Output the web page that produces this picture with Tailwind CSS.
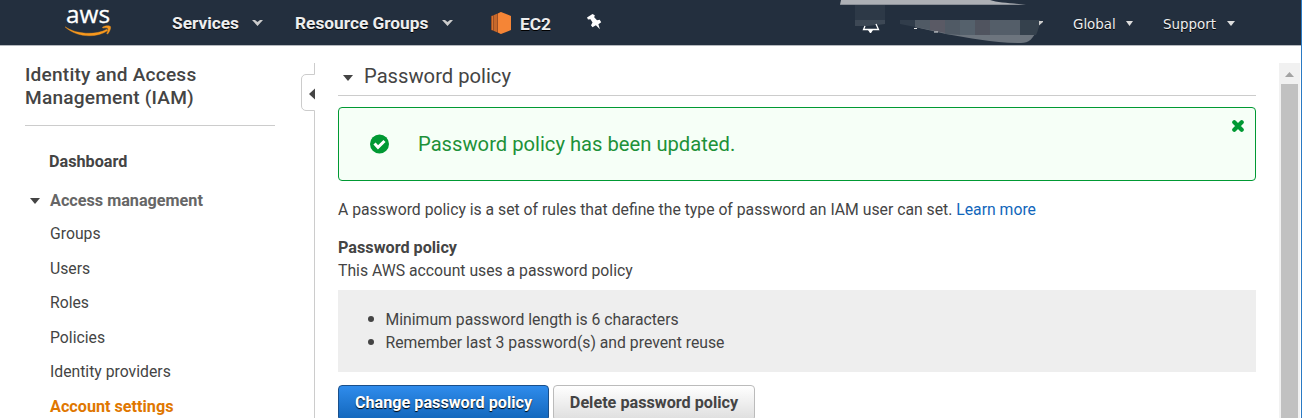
<!DOCTYPE html>
<html lang="en">
<head>
<meta charset="utf-8">
<title>IAM Management Console</title>
<script src="https://cdn.jsdelivr.net/npm/@tailwindcss/browser@4"></script>
</head>
<body class="relative flex h-[418px] w-[1302px] flex-col overflow-hidden bg-white font-['Roboto',sans-serif] text-[15.75px] text-[#444444]">
<header class="relative flex h-[46px] w-full shrink-0 items-start border-b border-[#b5b9be] bg-[#232f3e] text-[#eeeeee]">
  <svg class="ml-[60px] h-[45px] w-[60px] shrink-0 overflow-visible" viewBox="60 0 60 45">
    <text x="66" y="23" font-family="Open Sans" font-size="24.500" textLength="44" lengthAdjust="spacingAndGlyphs" fill="#fff" stroke="#fff" stroke-width=".3">aws</text>
    <path d="M65 26.800C76 34.500 96 35.500 107 29.200l.8 1.300C97 38 77 38 65 26.800z" fill="#f8981d" stroke="#f8981d" stroke-width=".4"/>
    <path d="M102.500 27.200c3-1.900 7.100-1.700 7.900-.8.8 1.200-.7 5.500-2.800 7.700l-.9-.5c1.200-2.600 1.800-4.500 1.200-5.200-.8-.7-2.900-.6-5.100-.3z" fill="#f8981d" stroke="#f8981d" stroke-width=".4"/>
  </svg>
  <nav class="flex h-[46px] items-center pl-[52px] text-[17.3px] leading-5 font-bold [text-shadow:0_1px_0_#000]">
    <span class="w-[80px] whitespace-nowrap">Services</span>
    <svg class="h-2 w-[11px]" viewBox="0 0 11 8"><path d="M0 1h3l2.500 2L8 1h3L5.500 7z" fill="#ccc"/></svg>
    <span class="ml-8 w-[147px] whitespace-nowrap">Resource Groups</span>
    <svg class="h-2 w-[11px]" viewBox="0 0 11 8"><path d="M0 1h3l2.500 2L8 1h3L5.500 7z" fill="#ccc"/></svg>
    <svg class="ml-[38px] h-[22px] w-5" viewBox="0 0 20 22"><path d="M0 4l3-1v16l-3-1z" fill="#9d5025"/><path d="M1 4h1v14H1z" fill="#d9752f"/><path d="M3 3l3-1.200v18.400L3 19z" fill="#c7682b"/><path d="M6 1.800L10 0v22l-4-1.800z" fill="#9d5025"/><path d="M7 1.400L10 0l10 4v14l-10 4-3-1.400z" fill="#f58536"/></svg>
    <span class="ml-[9px] w-[67px] translate-y-px">EC2</span>
    <svg class="h-4 w-4 -translate-y-px" viewBox="0 0 16 16"><path d="M5.500 0l2.300 1.300-.6 2 2.800 3 2.700-.6 1.500 2.500-2.800 2 1.500 5-4-4-3.400 2-1.500-2L5.500 8.500l-2-3.200-2.500.2L0 3.500z" fill="#fff"/></svg>
  </nav>
  <svg class="absolute left-[820px] top-0 h-[45px] w-[240px]" viewBox="0 0 240 45">
    <path d="M21 0h149c8 3 22 3 36 4.700H20z" fill="#adb0b5"/>
    <path d="M35 5h30v19l-18 2H35z" fill="#2d3947"/><path d="M35 20h30v4l-18 2H35z" fill="#3d4855"/>
    <path d="M45 26l-1.500 3.500h15L56 24" fill="none" stroke="#fff" stroke-width="1.300"/><path d="M48 30h5l-2 3h-1z" fill="#fff"/>
    <path d="M80 20h15v7l-15-3z" fill="#313d4b"/>
    <path d="M95 20h125l-2 8c-5 11-9 15-17 15-28 0-51-5-75-9L95 27z" fill="#6d757e"/>
    <path d="M95 20h15v10l-15-3zM125 20h15v15l-15-1z" fill="#505a65"/><path d="M110 20h15v13l-15-3z" fill="#5a5a65"/>
    <path d="M140 20h15v15h-15z" fill="#55616c"/><path d="M155 20h15v15h-15z" fill="#50545f"/><path d="M170 20h30v15h-30z" fill="#545e69"/><path d="M200 20h20c-1 7-2 11-4 15h-16z" fill="#35414d"/>
    <path d="M94 28.500h3M114 32h4" stroke="#e6e6e6"/><path d="M219 25.500l4-3.500v-1h-4z" fill="#ccc"/>
  </svg>
  <div class="absolute left-[1073px] top-[14px] flex h-5 items-center font-['DejaVu_Sans',sans-serif] text-[13.4px] leading-5 [text-shadow:0_1px_0_#000]">
    <span class="w-[53px] translate-y-px">Global</span>
    <svg class="h-[6px] w-[7px]" viewBox="0 0 7 6"><path d="M0 0h7L3.500 5z" fill="#ddd"/></svg>
    <span class="ml-[30px] w-[64px] translate-y-px">Support</span>
    <svg class="h-[6px] w-2" viewBox="0 0 8 6"><path d="M0 0h8L4 5z" fill="#ddd"/></svg>
  </div>
</header>
<div class="flex h-[372px]">
  <aside class="relative w-[315px] shrink-0 pl-[25px] leading-[20px]">
    <h1 class="h-[80px] w-[250px] border-b border-[#cccccc] pt-[17px] text-[19.1px] leading-[23px] font-medium tracking-[0.2px]">Identity and Access<br>Management (IAM)</h1>
    <div class="pt-[26px] pl-[24px] text-[16.2px] font-bold">Dashboard</div>
    <div class="flex items-center pt-[19px] text-[16.2px] font-bold text-[#666666]">
      <svg class="mr-[10px] ml-[5px] h-[6px] w-[10px]" viewBox="0 0 10 6"><path d="M0 0h10L5 6z" fill="#444"/></svg>Access management
    </div>
    <ul class="flex flex-col gap-[14.600px] pt-[13px] pl-[25px]">
      <li>Groups</li><li>Users</li><li>Roles</li><li>Policies</li><li>Identity providers</li><li class="text-[16.2px] font-bold text-[#e07700]">Account settings</li>
    </ul>
    <svg class="absolute top-[17px] left-[300px] h-[355px] w-[16px]" viewBox="0 0 16 355"><path d="M14.500 0v11.500H6a4.500 4.500 0 0 0-4.500 4.500v27a4.500 4.500 0 0 0 4.500 4.500h8.500V355" fill="none" stroke="#ccc"/><path d="M9 31l6-5.500v11z" fill="#444"/></svg>
  </aside>
  <main class="w-[941px] shrink-0 pl-[23px]">
    <h2 class="flex h-[50px] items-center border-b border-[#cccccc] pt-[10px] pl-[5px] text-[20.2px] leading-6"><svg class="mt-[5px] mr-[11px] h-[6px] w-[10px]" viewBox="0 0 10 6"><path d="M0 0h10L5 6z" fill="#444"/></svg><span>Password policy</span></h2>
    <div class="relative mt-[11px] flex h-[74px] items-center rounded-[4px] border border-[#009933] bg-[#f6fff7] pl-[31px] text-[20.2px] text-[#1d9139]">
      <svg class="h-5 w-5 -translate-x-[0.5px]" viewBox="0 0 20 20"><circle cx="10" cy="10" r="9.500" fill="#093"/><path d="M5 9.500l3.500 3.800L15 7" fill="none" stroke="#fff" stroke-width="3"/></svg>
      <span class="ml-[28px]">Password policy has been updated.</span>
      <svg class="absolute top-[12px] right-[11px] h-3 w-3" viewBox="0 0 12 12"><path d="M2.300 2.300l7.400 7.400M9.700 2.300l-7.400 7.400" stroke="#093" stroke-width="4.200" stroke-linecap="round"/></svg>
    </div>
    <p class="pt-[19px] leading-5">A password policy is a set of rules that define the type of password an IAM user can set. <a class="text-[#1166bb]">Learn more</a></p>
    <h3 class="pt-[16px] text-[16.2px] leading-[23px] font-bold">Password policy</h3>
    <p class="leading-[23px]">This AWS account uses a password policy</p>
    <ul class="mt-[8px] flex h-[82px] flex-col justify-center bg-[#eeeeee] pb-px pl-[30px] leading-[23px]">
      <li class="flex items-center"><i class="mr-[12px] -ml-[0.5px] h-[6px] w-[6px] rounded-full bg-[#444444]"></i>Minimum password length is 6 characters</li>
      <li class="flex items-center"><i class="mr-[12px] -ml-[0.5px] h-[6px] w-[6px] rounded-full bg-[#444444]"></i>Remember last 3 password(s) and prevent reuse</li>
    </ul>
    <div class="mt-[13px] flex gap-1 text-[16.2px] font-bold">
      <button class="h-[36px] w-[211px] rounded-[4px] border border-[#1a4f8a] bg-linear-to-b from-[#2f8cec] to-[#1166bb] whitespace-nowrap text-white [text-shadow:0_1px_1px_#000]">Change password policy</button>
      <button class="h-[36px] w-[202px] rounded-[4px] border border-[#bbbbbb] bg-linear-to-b from-white to-[#dedede] whitespace-nowrap">Delete password policy</button>
    </div>
  </main>
  <div class="mt-[17px] ml-[23px] flex h-[355px] w-[21px] flex-col items-center bg-[#f1f1f1]">
    <svg class="h-[21px] w-[9px] shrink-0" viewBox="0 0 9 21"><path d="M0 14h9L4.500 9z" fill="#a3a3a3"/></svg>
    <div class="w-[17px] grow bg-[#c1c1c1]"></div>
  </div>
</div>
<div class="absolute top-0 right-0 h-[418px] w-px bg-[#2a7ac4]"></div>
</body>
</html>
